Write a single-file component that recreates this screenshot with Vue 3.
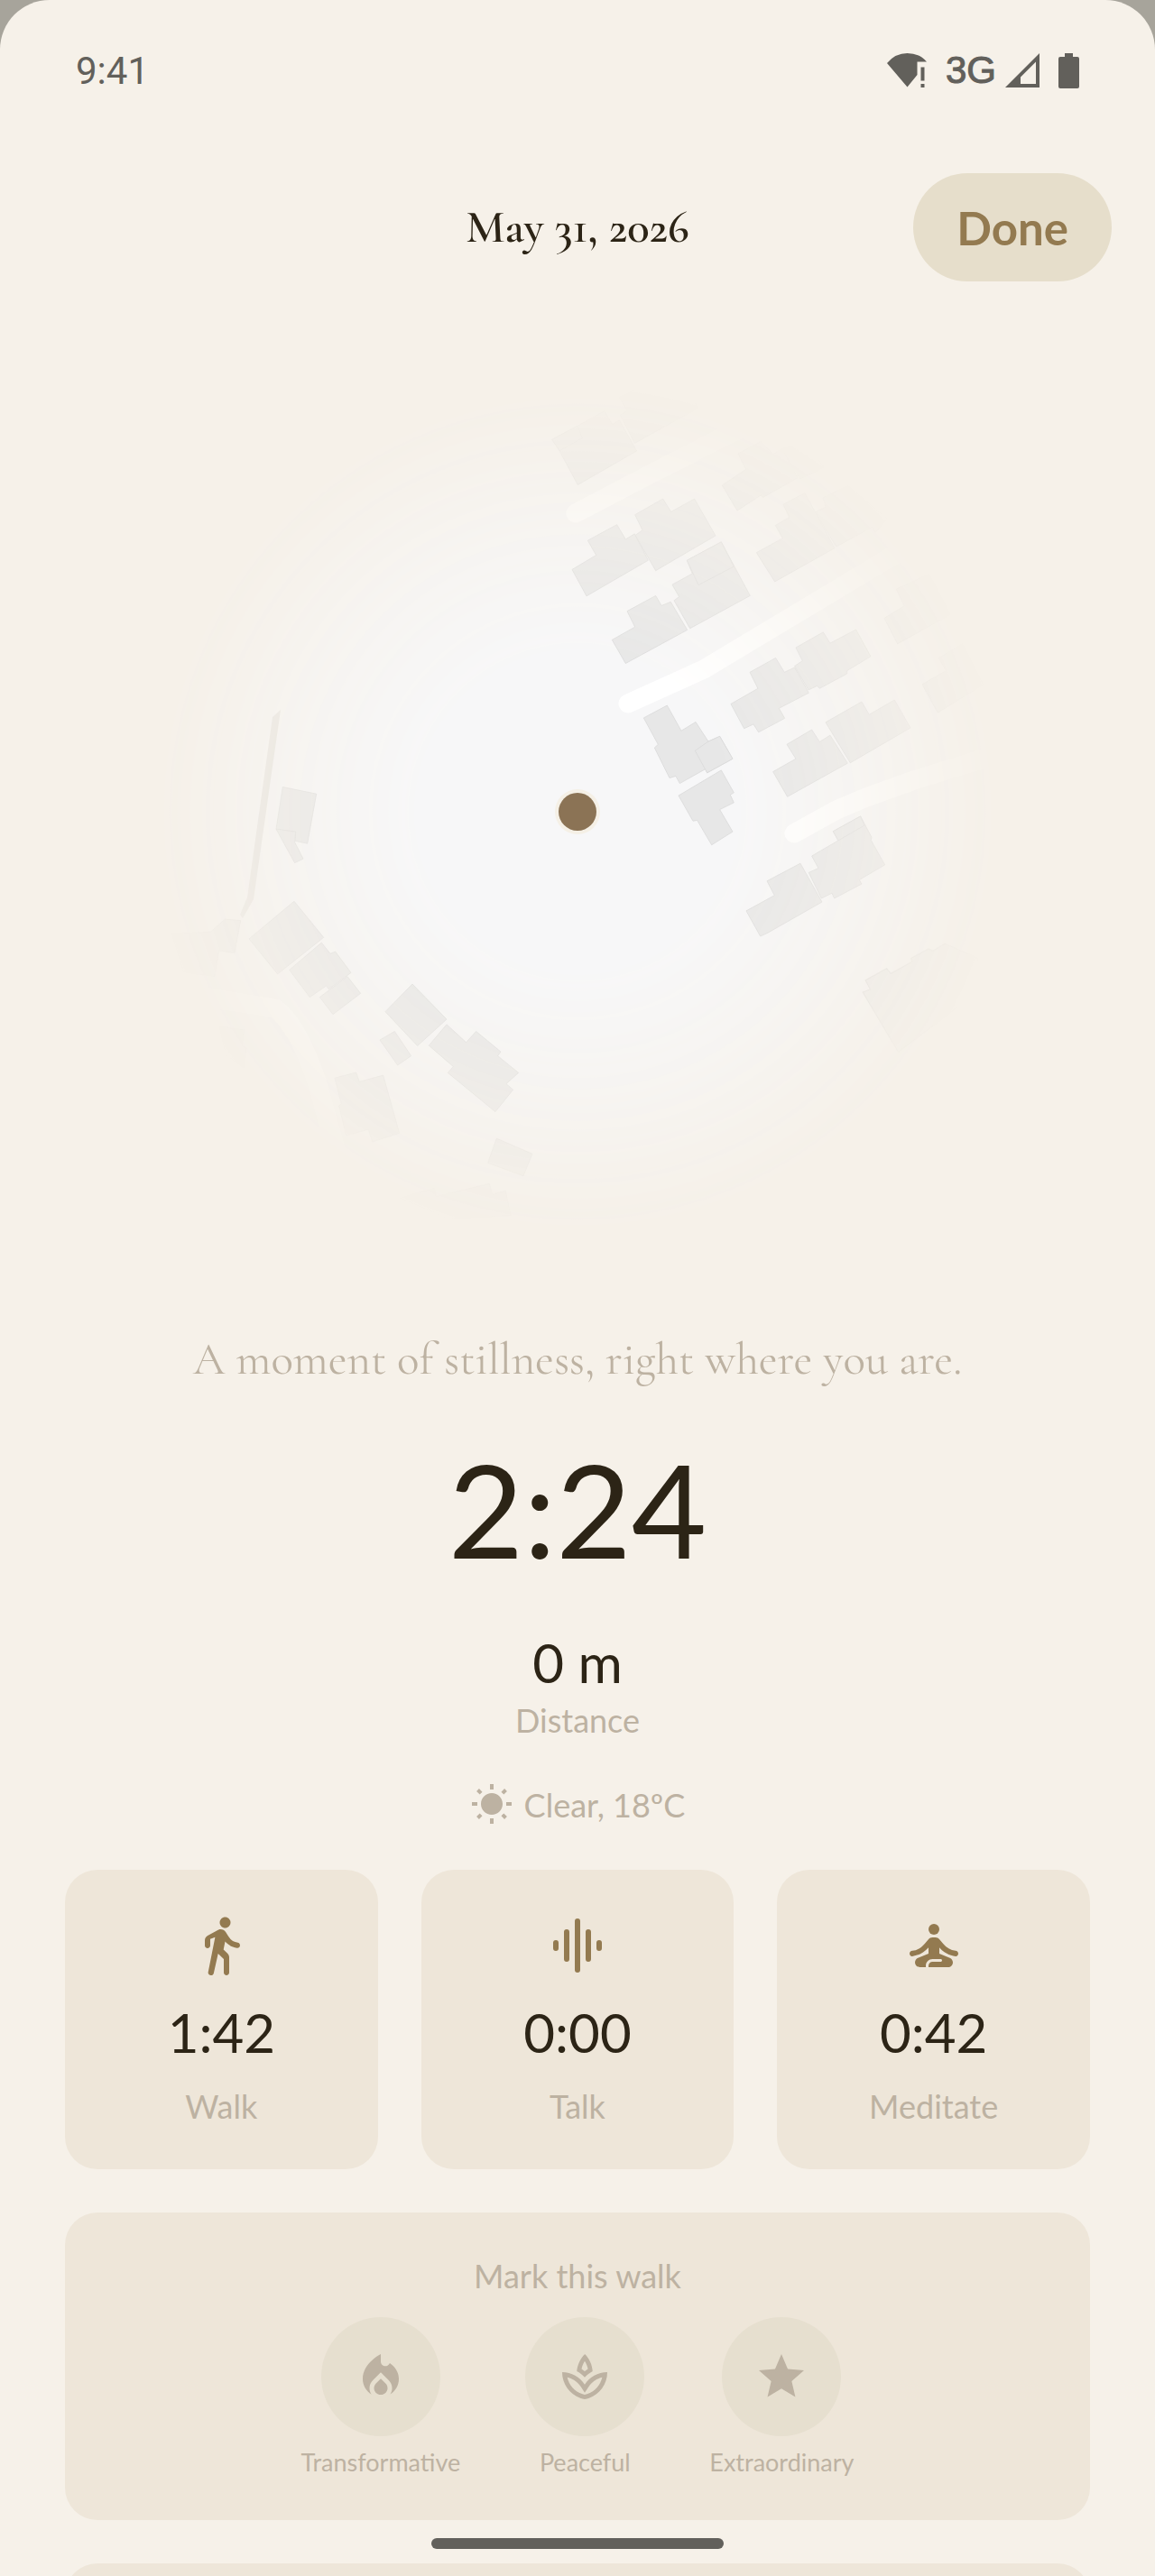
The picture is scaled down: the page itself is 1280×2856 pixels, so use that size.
<script setup>
import { ref } from 'vue'

const activities = [
  { id: 'walk', label: 'Walk', time: '1:42' },
  { id: 'talk', label: 'Talk', time: '0:00' },
  { id: 'meditate', label: 'Meditate', time: '0:42' }
]

const marks = [
  {
    id: 'transformative',
    label: 'Transformative',
    icon: 'M16,6l-0.44,0.55C14.38,8.02,12,7.19,12,5.3V2c0,0-8,4-8,11c0,2.92,1.56,5.47,3.89,6.86C7.33,19.07,7,18.11,7,17.06c0-1.32,0.52-2.56,1.47-3.5L12,10.1l3.53,3.47C16.48,14.5,17,15.74,17,17.06c0,1.03-0.32,1.99-0.87,2.78C18.45,18.45,20,15.92,20,13C20,10.14,18.48,7.67,16,6z M12,12.9l-2.13,2.09C9.31,15.55,9,16.28,9,17.06C9,18.68,10.35,20,12,20s3-1.32,3-2.94c0-0.78-0.31-1.52-0.87-2.07L12,12.9z'
  },
  {
    id: 'peaceful',
    label: 'Peaceful',
    icon: 'M15.49,9.63C15.31,6.84,14.18,4.12,12.06,2C9.92,4.14,8.74,6.86,8.51,9.63C9.79,10.31,10.97,11.19,12,12.26C13.03,11.2,14.21,10.32,15.49,9.63z M12,9.6L10.6,8.55C10.85,7.3,11.33,6.2,12,5.1C12.7,6.2,13.2,7.35,13.42,8.55z M12,15.45C9.85,12.17,6.18,10,2,10C2,15.32,5.36,19.82,10.03,21.49C10.66,21.72,11.32,21.89,12,22C12.68,21.88,13.33,21.71,13.97,21.49C18.64,19.82,22,15.32,22,10C17.82,10,14.15,12.17,12,15.45z M13.32,19.6C12.88,19.75,12.44,19.87,11.99,19.97C11.55,19.88,11.12,19.76,10.71,19.61C7.42,18.43,5.01,15.62,4.26,12.26C5.36,12.52,6.41,12.97,7.38,13.59L7.36,13.6C7.49,13.69,7.62,13.78,7.75,13.85L7.82,13.89C8.81,14.61,9.66,15.5,10.33,16.54L12,19.1L13.67,16.55C14.36,15.5,15.22,14.6,16.2,13.89L16.27,13.84C16.36,13.79,16.45,13.73,16.54,13.67L16.53,13.65C17.51,13,18.6,12.52,19.74,12.25C18.99,15.62,16.59,18.43,13.32,19.6z'
  },
  {
    id: 'extraordinary',
    label: 'Extraordinary',
    icon: 'M12,17.27L18.18,21l-1.64,-7.03L22,9.24l-7.19,-0.61L12,2L9.19,8.63L2,9.24l5.46,4.73L5.82,21z'
  }
]

const selectedMark = ref(null)

// Building footprints, grouped by map tile
const tiles = [
  {
    id: 'east',
    transform: 'translate(580 420) scale(0.3333 0.4082)',
    buildings: [
      '95,165 180,128 270,87 296,124 319,112 377,196 181,288 119,194',
      '95,165 180,128 196,161 121,195',
      '322,98 345,87 320,50 420,10 570,60 580,80 370,175',
      '162,518 242,479 214,439 311,396 340,436 370,421 415,493 210,590',
      '372,425 396,411 371,369 464,326 491,361 569,326 639,426 440,521',
      '295,709 371,674 345,631 440,589 459,616 490,606 545,682 340,773',
      '501,602 518,592 495,559 562,529 544,493 658,443 754,589 554,678',
      '544,493 658,443 700,510 582,560',
      '400,921 478,887 525,956 573,932 615,985 653,971 696,1032 611,1070 605,1060 520,1099 507,1079 486,1084 436,1002 448,993',
      '571,1010 615,985 653,971 696,1032 611,1070',
      '516,1132 658,1063 700,1124 688,1130 700,1151 653,1170 696,1230 626,1266 578,1199 564,1201',
      '690,883 780,841 753,797 839,758 868,797 902,784 949,853 850,895 869,922 782,960 765,938 734,950',
      '902,780 928,766 906,730 997,688 1020,718 1106,681 1155,754 1076,793 1076,801 985,841 977,834 948,845',
      '830,1067 906,1032 876,993 959,953 985,986 1020,968 1078,1044 878,1135',
      '1005,933 1125,877 1150,912 1234,872 1287,948 1087,1043',
      '741,1445 835,1403 810,1364 921,1316 993,1421 810,1506 788,1514',
      '949,1341 981,1329 959,1296 1047,1254 1030,1229 1121,1188 1158,1245 1156,1253 1202,1320 1117,1361 1125,1372 1034,1411 1026,1397 991,1411',
      '1047,1254 1030,1229 1121,1188 1134,1213',
      '661,289 740,246 714,203 790,170 830,205 860,190 912,269 797,322 790,316 711,358',
      '860,190 940,175 1000,240 920,272',
      '775,472 862,433 838,398 884,376 864,341 936,310 1035,460 836,551',
      '971,362 1005,348 996,323 1080,290 1210,380 1170,418 1160,403 1040,456',
      '1200,650 1266,617 1240,571 1350,530 1420,640 1244,720',
      '1326,830 1405,793 1381,758 1460,720 1530,830 1378,907'
    ]
  },
  {
    id: 'west',
    transform: 'translate(180 760) scale(0.3333 0.3827)',
    buildings: [
      '400,294 512,314 482,458 440,450 443,424 378,416',
      '378,416 443,424 440,454 468,502 440,514',
      '438,625 536,730 383,836 288,734',
      '422,824 529,745 558,777 575,771 627,832 553,880 545,870 490,903',
      '523,903 615,843 659,892 567,953',
      '741,945 831,865 945,967 848,1044',
      '723,1027 772,1002 827,1073 782,1100',
      '886,1043 945,982 1010,1034 1043,1002 1125,1061 1115,1073 1184,1122 1143,1154 1166,1171 1107,1235 949,1122 967,1104',
      '573,1137 644,1121 655,1148 734,1129 788,1297 698,1322 685,1286 611,1304 587,1218 595,1212',
      '1111,1312 1230,1357 1200,1421 1082,1383',
      '30,718 160,714 208,677 260,681 240,775 188,768 174,843 70,830',
      '190,988 272,998 265,1045 280,1050 270,1108 210,1070',
      '790,1485 905,1456 910,1480 1087,1443 1097,1475 1141,1463 1158,1535 950,1545'
    ]
  },
  {
    id: 'south-east',
    transform: 'translate(180 400) scale(0.5867 0.625)',
    buildings: ['1323,1120 1337,1115 1328,1099 1368,1078 1376,1087 1416,1066 1414,1060 1447,1043 1455,1047 1478,1034 1540,1060 1540,1120 1390,1226']
  }
]

const roads = [
  'M638 569L720 526L840 465',
  'M696 780L780 742L993 614L1090 570',
  'M880 924L927 898L960 884L1013 865L1100 838',
  'M225 1105L305 1118Q330 1135 353 1205L372 1275'
]
</script>

<template>
  <div class="backdrop">
    <main class="screen">
      <div class="status-bar">
        <span class="clock">9:41</span>
        <div class="status-icons">
          <svg class="wifi" viewBox="0 0 44 38" aria-hidden="true">
            <path d="M0 11Q9 0 22.500 0Q36 0 44 9.500H33.500V24L22.500 37.500Z" />
            <path d="M37.500 15.500h4v15h-4zM37.500 34h4v4h-4z" />
          </svg>
          <span class="network">3G</span>
          <svg class="signal" viewBox="0 0 38 38" aria-hidden="true">
            <path fill-rule="evenodd" d="M0 38L38 0V38ZM34 9.500L17 26.500V34H34Z" />
          </svg>
          <svg class="battery" viewBox="0 0 23 39" aria-hidden="true">
            <path d="M7 0h9v4h5q2 0 2 2v31q0 2-2 2H2q-2 0-2-2V6q0-2 2-2h5z" />
          </svg>
        </div>
      </div>

      <header class="header">
        <h1 class="date">May 31, 2026</h1>
        <button type="button" class="done">Done</button>
      </header>

      <svg class="map" viewBox="160 420 960 960" role="img" aria-label="Map of the walk">
        <defs>
          <radialGradient id="map-fade" gradientUnits="userSpaceOnUse" cx="640" cy="900" r="480">
            <stop offset="0" stop-color="#fff" />
            <stop offset="0.35" stop-color="#fff" />
            <stop offset="0.65" stop-color="#fff" stop-opacity="0.55" />
            <stop offset="0.85" stop-color="#fff" stop-opacity="0.2" />
            <stop offset="0.95" stop-color="#fff" stop-opacity="0.05" />
            <stop offset="1" stop-color="#fff" stop-opacity="0" />
          </radialGradient>
          <mask id="map-mask" maskUnits="userSpaceOnUse" x="160" y="420" width="960" height="960">
            <rect x="160" y="420" width="960" height="960" fill="url(#map-fade)" />
          </mask>
        </defs>
        <g mask="url(#map-mask)">
          <rect class="land" x="160" y="420" width="960" height="960" />
          <path v-for="road in roads" :key="road" class="road" :d="road" />
          <g v-for="tile in tiles" :key="tile.id" :transform="tile.transform">
            <polygon v-for="points in tile.buildings" :key="points" class="building" :points="points" />
          </g>
          <polygon class="wall" points="302,795 311,787 281,997 269,1018 266,1014 274,995" />
        </g>
        <circle class="dot-ring" cx="640" cy="900" r="25" />
        <circle class="dot" cx="640" cy="900" r="21" />
      </svg>

      <p class="reflection">A moment of stillness, right where you are.</p>
      <p class="duration">2:24</p>
      <p class="distance">0 m</p>
      <p class="distance-label">Distance</p>

      <p class="weather">
        <svg class="sun" viewBox="0 0 24 24" aria-hidden="true">
          <path d="M6.76 4.84l-1.8-1.79-1.41 1.41 1.79 1.79 1.42-1.41zM4 10.5H1v2h3v-2zm9-9.95h-2V3.5h2V.55zm7.45 3.91l-1.41-1.41-1.79 1.79 1.41 1.41 1.79-1.79zm-3.21 13.7l1.79 1.8 1.41-1.41-1.8-1.79-1.4 1.4zM20 10.5v2h3v-2h-3zm-8-5c-3.310 0-6 2.690-6 6s2.690 6 6 6 6-2.690 6-6-2.690-6-6-6zm-1 16.950h2V19.500h-2v2.950zm-7.450-3.910l1.410 1.410 1.790-1.800-1.410-1.410-1.790 1.800z" />
        </svg>
        <span>Clear, 18ºC</span>
      </p>

      <section class="activities">
        <article v-for="item in activities" :key="item.id" class="card">
          <svg class="card-icon" viewBox="0 0 24 24" aria-hidden="true">
            <path
              v-if="item.id === 'walk'"
              d="M13.500,5.500c1.100,0,2-.9,2-2s-.9-2-2-2-2,.9-2,2,.9,2,2,2zM9.800,8.900L7.240,21.810c-.13,.61,.35,1.190,.98,1.190h.08c.47,0,.87-.32,.98-.78L10.900,15l2.100,2v5c0,.55,.45,1,1,1s1-.45,1-1v-5.640c0-.55-.22-1.070-.62-1.450L12.900,13.500l.6-3c1.070,1.240,2.620,2.130,4.360,2.410,.6,.09,1.140-.39,1.140-1,0-.49-.36-.9-.84-.98-1.530-.25-2.800-1.150-3.460-2.330l-1-1.600c-.56-.89-1.680-1.250-2.650-.84L7.220,8.280C6.480,8.600,6,9.320,6,10.120V12c0,.55,.45,1,1,1s1-.45,1-1V9.600L9.800,8.900z"
            />
            <path
              v-else-if="item.id === 'talk'"
              class="wave"
              d="M4 11v2M8 7v10M12 3v18M16 7v10M20 11v2"
            />
            <template v-else>
              <circle cx="12" cy="6" r="2" />
              <path d="M21,15c0-.56-.45-.98-1.010-1.050C18.150,13.720,16.610,12.770,15.400,11.320L14.060,9.720C13.680,9.260,13.120,9,12.530,9h-1.050c-.59,0-1.150,.26-1.530,.72L8.610,11.320C7.400,12.770,5.860,13.720,4.010,13.950C3.450,14.020,3,14.450,3,15s.45,1.020,1,.96C6.320,15.670,8.400,14.580,10,12.750V15L6.120,16.550C5.450,16.820,5,17.480,5,18.210C5,19.200,5.800,20,6.790,20H9v-.5C9,18.120,10.120,17,11.500,17h3c.28,0,.5,.22,.5,.5s-.22,.5-.5,.5h-3c-.83,0-1.500,.67-1.500,1.500V20h7.210C18.200,20,19,19.200,19,18.210c0-.73-.45-1.390-1.120-1.660L14,15V12.750c1.600,1.830,3.680,2.920,6,3.210C20.550,16.020,21,15.560,21,15z" />
            </template>
          </svg>
          <span class="card-value">{{ item.time }}</span>
          <span class="card-label">{{ item.label }}</span>
        </article>
      </section>

      <section class="panel">
        <h2 class="panel-title">Mark this walk</h2>
        <div class="marks">
          <button
            v-for="mark in marks"
            :key="mark.id"
            type="button"
            class="mark"
            :aria-pressed="selectedMark === mark.id"
            @click="selectedMark = mark.id"
          >
            <span class="mark-circle">
              <svg class="mark-icon" viewBox="0 0 24 24" aria-hidden="true">
                <path fill-rule="evenodd" :d="mark.icon" />
              </svg>
            </span>
            <span class="mark-label">{{ mark.label }}</span>
          </button>
        </div>
      </section>

      <section class="panel next-panel"></section>
      <div class="home-bar"></div>
    </main>
  </div>
</template>

<style>
body {
  margin: 0;
  background: #f6f1e9;
}
</style>

<style scoped>
.backdrop {
  background: #a7a49b;
}

.screen {
  box-sizing: border-box;
  height: 100vh;
  overflow: hidden;
  padding: 0 72px;
  border-radius: 55px 55px 0 0;
  background: #f6f1e9;
  color: #2c2416;
  font-family: Lato, sans-serif;
}

p,
h1,
h2 {
  margin: 0;
  font-weight: 400;
  text-align: center;
}

button {
  border: 0;
  font-family: inherit;
  cursor: pointer;
}

svg {
  display: block;
  flex: none;
  fill: currentColor;
}

.status-bar {
  display: flex;
  align-items: center;
  justify-content: space-between;
  height: 156px;
  padding: 0 12px;
  color: #62605b;
}

.clock {
  font: 42px Roboto, sans-serif;
}

.status-icons {
  display: flex;
  align-items: center;
}

.wifi {
  width: 44px;
  height: 38px;
}

.network {
  margin: 0 10px 0 21px;
  font: 42px 'Liberation Sans', sans-serif;
  -webkit-text-stroke: 1px currentColor;
}

.signal {
  width: 38px;
  height: 38px;
}

.battery {
  width: 23px;
  height: 39px;
  margin-left: 21px;
}

.header {
  display: grid;
  grid-template-columns: 1fr auto 1fr;
  align-items: center;
  margin: 36px -24px 0;
}

.date {
  grid-column: 2;
  font-family: 'Cormorant Garamond', 'Liberation Serif', serif;
  font-size: 51px;
  font-weight: 600;
}

.done {
  justify-self: end;
  height: 120px;
  padding: 0 48px;
  border-radius: 60px;
  background: #e6decb;
  color: #937a50;
  font-size: 51px;
  font-weight: 700;
}

.map {
  width: 960px;
  max-width: 100%;
  margin: 108px auto 0;
}

.land {
  fill: #f7f7f8;
}

.road {
  fill: none;
  stroke: #fff;
  stroke-width: 21;
  stroke-linecap: round;
  stroke-linejoin: round;
}

.building {
  fill: #e7e7e7;
  stroke: #d8d8d8;
  stroke-width: 2;
}

.wall {
  fill: #e2e0dd;
}

.dot-ring {
  fill: #f5f0e6;
}

.dot {
  fill: #8b7355;
}

.reflection {
  margin-top: 97px;
  color: #bdb2a2;
  font-family: 'Cormorant Garamond', 'Liberation Serif', serif;
  font-size: 51px;
  line-height: 60px;
}

.duration {
  margin-top: 48px;
  font-size: 144px;
  line-height: 176px;
}

.distance {
  margin-top: 46px;
  font-size: 60px;
  line-height: 72px;
}

.distance-label {
  color: #bdb2a2;
  font-size: 36px;
  line-height: 56px;
}

.weather {
  display: flex;
  align-items: center;
  justify-content: center;
  gap: 12px;
  margin-top: 42px;
  color: #bdb2a2;
  font-size: 36px;
  line-height: 48px;
}

.sun {
  width: 48px;
  height: 48px;
}

.activities {
  display: grid;
  grid-template-columns: repeat(3, 1fr);
  gap: 48px;
  margin-top: 48px;
}

.card {
  display: flex;
  flex-direction: column;
  align-items: center;
  gap: 24px;
  padding: 48px 0;
  border-radius: 36px;
  background: #eee6d9;
}

.card-icon {
  width: 72px;
  height: 72px;
  color: #937a50;
}

.wave {
  fill: none;
  stroke: currentColor;
  stroke-width: 2;
  stroke-linecap: round;
}

.card-value {
  font-size: 60px;
  line-height: 72px;
}

.card-label {
  color: #bdb2a2;
  font-size: 36px;
  line-height: 44px;
}

.panel {
  margin-top: 48px;
  padding: 48px;
  border-radius: 36px;
  background: #eee6d9;
}

.panel-title {
  color: #bdb2a2;
  font-size: 36px;
  line-height: 44px;
}

.marks {
  display: flex;
  justify-content: center;
  gap: 72px;
  margin-top: 24px;
}

.mark {
  display: flex;
  flex-direction: column;
  align-items: center;
  gap: 12px;
  padding: 0;
  background: none;
  color: #bdb2a2;
}

.mark-circle {
  display: grid;
  place-items: center;
  width: 132px;
  height: 132px;
  border-radius: 50%;
  background: #e6dfcf;
}

.mark-icon {
  width: 60px;
  height: 60px;
}

.mark-label {
  font-size: 27px;
  line-height: 33px;
}

.next-panel {
  min-height: 96px;
}

.home-bar {
  position: fixed;
  bottom: 30px;
  left: 50%;
  width: 324px;
  height: 12px;
  border-radius: 6px;
  background: #62605b;
  transform: translateX(-50%);
}
</style>
